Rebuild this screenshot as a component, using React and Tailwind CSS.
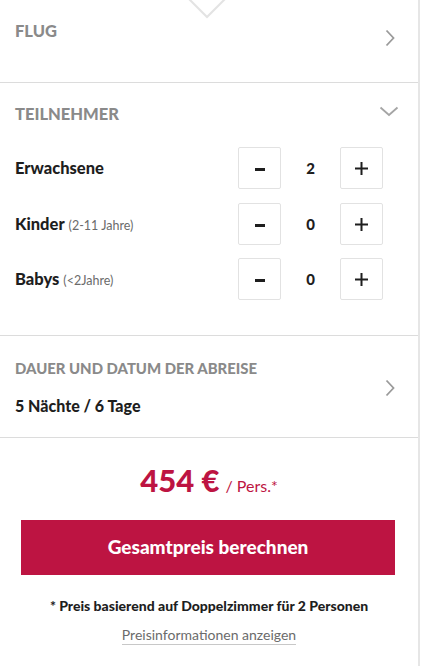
import React from "react";

const font = { fontFamily: "Lato, 'Open Sans', sans-serif" };

function ChevronRight() {
  return (
    <svg width="10" height="18" viewBox="0 0 10 18" className="shrink-0">
      <polyline points="1.5,1.5 8.5,9 1.5,16.5" fill="none" stroke="#9a9a9a" strokeWidth="1.8" />
    </svg>
  );
}

function ChevronDown() {
  return (
    <svg width="20" height="11" viewBox="0 0 20 11" className="shrink-0">
      <polyline points="1.5,1.5 10,9 18.5,1.5" fill="none" stroke="#a5a5a5" strokeWidth="1.8" />
    </svg>
  );
}

function Counter({ label, sub, value }) {
  return (
    <div className="flex items-center h-[42px]">
      <div className="flex-1 flex items-baseline gap-[4px]">
        <span className="text-[16.5px] font-black text-[#1e1e1e]">{label}</span>
        {sub && <span className="text-[12.5px] text-[#6b6b6b]">{sub}</span>}
      </div>
      <div className="flex items-center mr-[35px]">
        <button className="w-[43px] h-[42px] border border-[#e2e2e2] rounded-[2px] flex items-center justify-center bg-white">
          <span className="block w-[10px] h-[3px] bg-[#1e1e1e] mt-[2px]" />
        </button>
        <div className="w-[59px] text-center text-[15px] font-black text-[#1e1e1e]">{value}</div>
        <button className="w-[43px] h-[42px] border border-[#e2e2e2] rounded-[2px] flex items-center justify-center bg-white">
          <svg width="13" height="13" viewBox="0 0 13 13">
            <rect x="5.5" y="0" width="2" height="13" fill="#1e1e1e" />
            <rect x="0" y="5.5" width="13" height="2" fill="#1e1e1e" />
          </svg>
        </button>
      </div>
    </div>
  );
}

export default function App() {
  return (
    <div className="w-[421px] h-[666px] bg-white flex overflow-hidden" style={font}>
      <div className="w-[420px] border-r-2 border-[#e6e6e6] relative flex flex-col">
        <svg className="absolute left-[188px] top-0" width="40" height="20" viewBox="0 0 40 20">
          <polyline points="1,-1 19,17 37,-1" fill="none" stroke="#e3e3e3" strokeWidth="2" />
        </svg>

        <div className="h-[83px] border-b border-[#dcdcdc] pl-[15px] pr-[23px] flex items-center">
          <div className="flex-1 self-start pt-[21px]">
            <div className="text-[16.5px] leading-[20px] font-black text-[#8a8a8a]">FLUG</div>
          </div>
          <div className="mt-[-6px]">
            <ChevronRight />
          </div>
        </div>

        <div className="border-b border-[#dcdcdc] pl-[15px] pt-[21px] pb-[35px]">
          <div className="flex items-center pr-[19px]">
            <div className="flex-1 text-[16.5px] leading-[20px] font-black text-[#8a8a8a]">TEILNEHMER</div>
            <div className="mt-[-6px]">
              <ChevronDown />
            </div>
          </div>
          <div className="mt-[23px] flex flex-col">
            <Counter label="Erwachsene" value="2" />
            <div className="h-[14px]" />
            <Counter label="Kinder" sub="(2-11 Jahre)" value="0" />
            <div className="h-[13px]" />
            <Counter label="Babys" sub="(<2Jahre)" value="0" />
          </div>
        </div>

        <div className="border-b border-[#dcdcdc] pl-[15px] pr-[23px] h-[102px] flex items-center">
          <div className="flex-1">
            <div className="text-[14.9px] leading-[20px] font-black text-[#8a8a8a]">DAUER UND DATUM DER ABREISE</div>
            <div className="mt-[18px] text-[16px] leading-[20px] font-black text-[#1e1e1e]">5 Nächte / 6 Tage</div>
          </div>
          <div className="mt-[2px]">
            <ChevronRight />
          </div>
        </div>

        <div className="flex flex-col items-center pt-[22px]">
          <div className="flex items-baseline text-[#bd1442]">
            <span className="text-[31px] leading-[40px] font-black">454 €</span>
            <span className="ml-[6px] text-[16px]">/ Pers.*</span>
          </div>
          <button className="mt-[20px] w-[374px] h-[55px] bg-[#bd1442] text-white text-[19px] font-black flex items-center justify-center self-start ml-[21px]">
            Gesamtpreis berechnen
          </button>
          <div className="mt-[20px] text-[14px] font-black text-[#1e1e1e]">* Preis basierend auf Doppelzimmer für 2 Personen</div>
          <div className="mt-[9px] text-[14px] text-[#6b6b6b] border-b border-[#c8c8c8] leading-[19px]">Preisinformationen anzeigen</div>
        </div>
      </div>
    </div>
  );
}
